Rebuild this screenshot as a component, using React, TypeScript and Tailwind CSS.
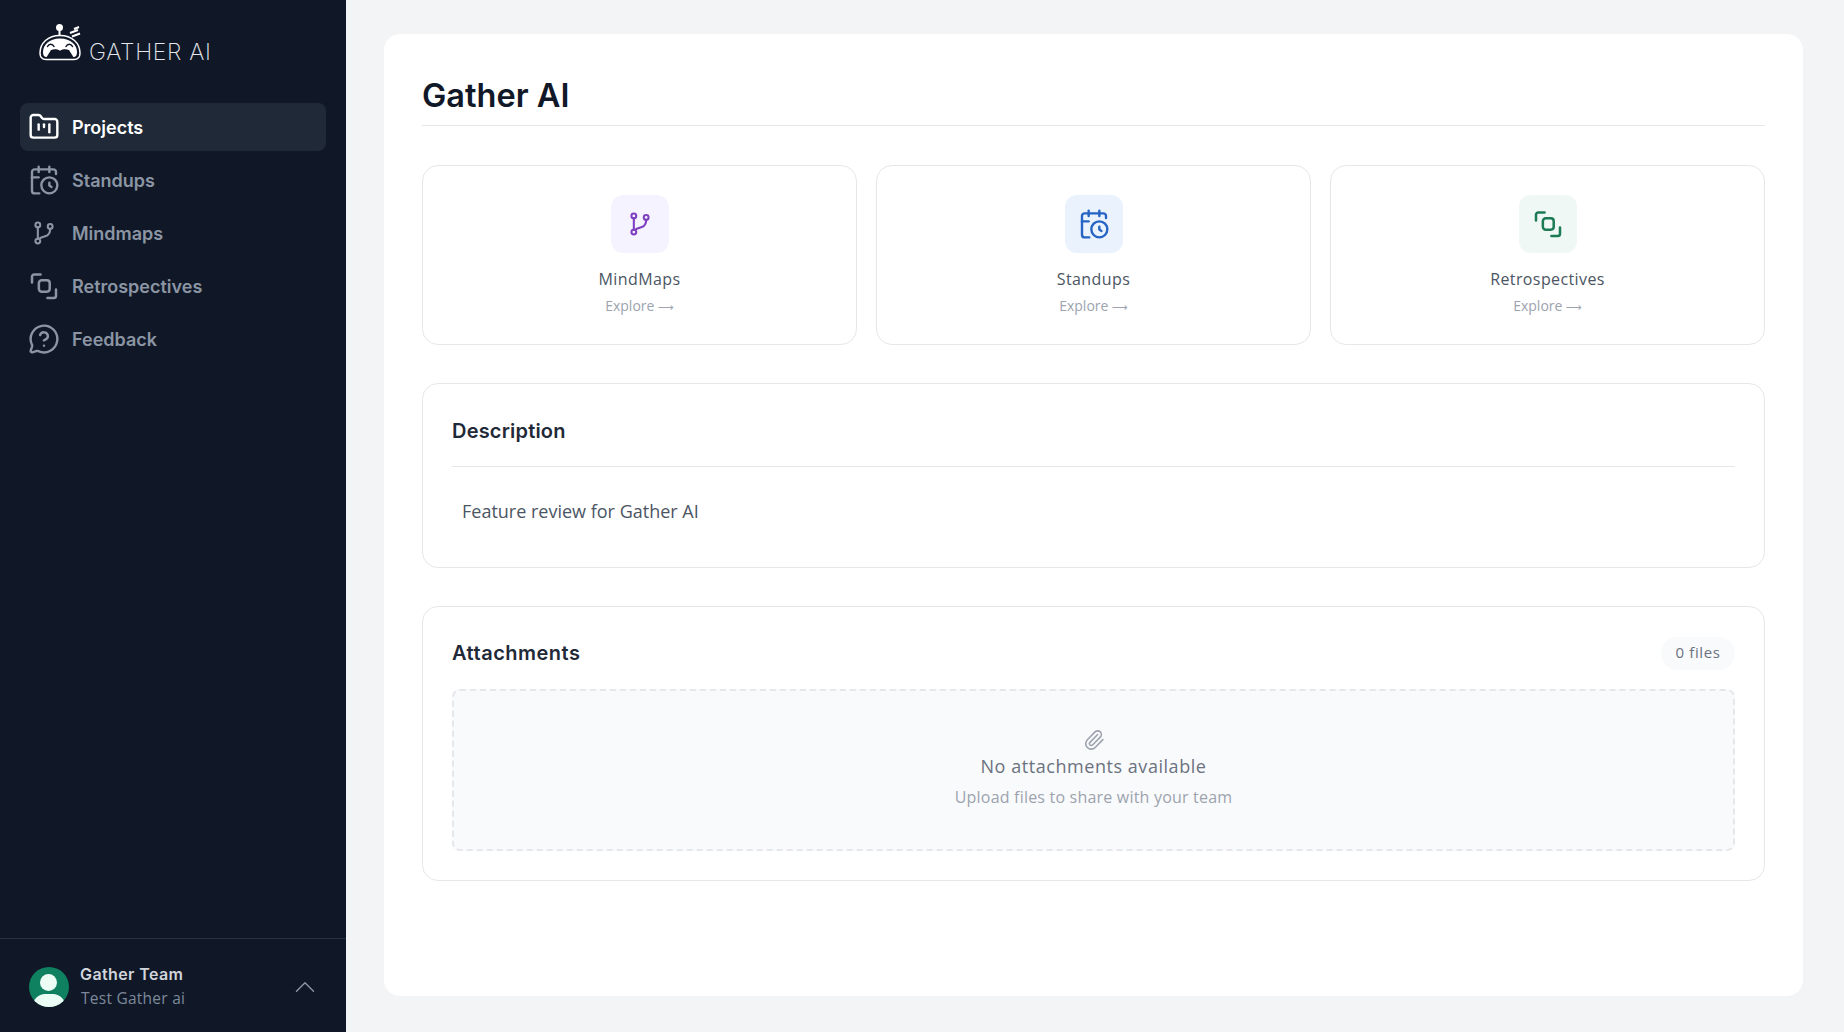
import { CalendarClock, ChevronUp, FolderKanban, MessageCircleQuestion, Paperclip } from "lucide-react";

function BranchIcon({ className }: { className: string }) {
  return (
    <svg className={className} viewBox="-2 -2 28 28" fill="none" stroke="currentColor" strokeWidth="1.800" strokeLinecap="round" strokeLinejoin="round">
      <circle cx="6.600" cy="4.900" r="2.100" />
      <circle cx="6.600" cy="19.100" r="2.100" />
      <circle cx="17.400" cy="6.300" r="2.100" />
      <path d="M6.600 7v10" />
      <path d="M17.400 8.400c0 4-1.500 5.600-4.400 6.400l-4.400 1.500" />
    </svg>
  );
}

function RetroIcon({ className }: { className: string }) {
  return (
    <svg className={className} viewBox="-2 -2 28 28" fill="none" stroke="currentColor" strokeWidth="2.200" strokeLinecap="round" strokeLinejoin="round">
      <path d="M1.500 9V4a2 2 0 0 1 2-2H9" />
      <rect x="7.500" y="7" width="9.500" height="10" rx="2.500" />
      <path d="M22.500 15v5.500a2 2 0 0 1-2 2H15" />
    </svg>
  );
}

function Logo() {
  return (
    <svg className="h-[42px] w-[44px]" viewBox="0 0 44 42" fill="none">
      <circle cx="21.500" cy="4.500" r="3.500" fill="#fff" />
      <path d="M21.500 7v6" stroke="#fff" strokeWidth="2" />
      <path d="M2 30c0-10 8-17.500 20-17.500S42 20 42 30c0 4.500-2 6.500-6 6.500H8c-4 0-6-2-6-6.500Z" stroke="#fff" strokeWidth="1.500" />
      <path d="M5 29c0-7 6-13.500 17-13.500S39 22 39 29c0 3-1 5-4 5H9c-3 0-4-2-4-5Z" fill="#fff" />
      <path d="M8 35l5-8c3-1 6-1 9 .8 3-1.800 6-1.800 9-.8l5 8Z" fill="#101828" />
      <path d="M9.500 23.500c1.500-3 5-3 6.500 0M28 23.500c1.500-3 5-3 6.500 0" stroke="#101828" strokeWidth="1.500" strokeLinecap="round" />
      <path d="m32 10 8-3M34 13.500l8-3M36 6l5-2" stroke="#fff" strokeWidth="2.200" />
    </svg>
  );
}

const navItems = [
  { label: "Projects", icon: FolderKanban, active: true },
  { label: "Standups", icon: CalendarClock, active: false },
  { label: "Mindmaps", icon: BranchIcon, active: false },
  { label: "Retrospectives", icon: RetroIcon, active: false },
  { label: "Feedback", icon: MessageCircleQuestion, active: false },
];

const shortcuts = [
  { label: "MindMaps", icon: BranchIcon, tile: "bg-[#f5f3ff]", color: "text-[#7e3fc0]" },
  { label: "Standups", icon: CalendarClock, tile: "bg-[#eaf3fd]", color: "text-[#2563c4]" },
  { label: "Retrospectives", icon: RetroIcon, tile: "bg-[#eff8f5]", color: "text-[#1c7a55]" },
];

export default function App() {
  return (
    <div className="flex h-[1032px] w-[1844px] overflow-hidden bg-[#f3f4f6] font-['Open_Sans',sans-serif]">
      <aside className="flex w-[346px] shrink-0 flex-col bg-[#101828]">
        <div className="flex h-[103px] items-start pl-[38px] pt-[23px]">
          <Logo />
          <span className="ml-[7px] mt-[16px] font-['Inter',sans-serif] text-[23px] font-extralight leading-[26px] tracking-[0.7px] text-[#e5e7eb]">GATHER AI</span>
        </div>
        <nav className="flex flex-col gap-[5px] px-[20px]">
          {navItems.map((item) => (
            <a
              key={item.label}
              href="#"
              className={
                item.active
                  ? "flex h-[48px] items-center gap-[12px] rounded-lg bg-[#1f2937] pl-[8px] font-['Inter',sans-serif] text-[18px] font-semibold text-white"
                  : "flex h-[48px] items-center gap-[12px] rounded-lg pl-[8px] font-['Inter',sans-serif] text-[18px] font-semibold text-[#8b95a3]"
              }
            >
              <item.icon className="h-[32px] w-[32px]" strokeWidth={1.800} />
              {item.label}
            </a>
          ))}
        </nav>
        <div className="mt-auto flex h-[94px] items-center border-t border-[#283242] pl-[29px] pr-[24px] pt-[2px]">
          <div className="relative h-[40px] w-[40px] overflow-hidden rounded-full bg-[#0f8060]">
            <span className="absolute left-[11px] top-[7px] h-[17px] w-[17px] rounded-full bg-[#ecfdf5]" />
            <span className="absolute left-[4px] top-[27px] h-[24px] w-[32px] rounded-full bg-[#ecfdf5]" />
          </div>
          <div className="ml-[11px] flex-1">
            <p className="font-['Inter',sans-serif] text-[16px] font-semibold leading-[22px] tracking-[0.4px] text-[#d1d5db]">Gather Team</p>
            <p className="mt-[1px] pl-[1px] text-[15.500px] leading-[24px] tracking-[0.25px] text-[#7d8899]">Test Gather ai</p>
          </div>
          <ChevronUp className="h-[34px] w-[34px] text-[#8b95a3]" strokeWidth={1} />
        </div>
      </aside>

      <main className="flex-1 pb-[36px] pl-[38px] pr-[41px] pt-[34px]">
        <div className="h-full rounded-2xl bg-white px-[38px] pt-[36px]">
          <h1 className="border-b border-[#e5e7eb] pb-[3px] font-['Inter',sans-serif] text-[32.500px] font-semibold leading-[52px] text-[#111827]">Gather AI</h1>

          <div className="mt-[39px] grid grid-cols-3 gap-[19px]">
            {shortcuts.map((card) => (
              <div key={card.label} className="flex h-[180px] flex-col items-center rounded-2xl border border-[#e5e7eb] pt-[29px]">
                <div className={`flex h-[58px] w-[58px] items-center justify-center rounded-xl ${card.tile}`}>
                  <card.icon className={`h-[32px] w-[32px] ${card.color}`} strokeWidth={1.800} />
                </div>
                <p className="mt-[14px] text-[16px] leading-[24px] tracking-[0.4px] text-[#4b5563]">{card.label}</p>
                <p className="mt-[5px] text-[14px] leading-[20px] text-[#9ca3af]">
                  Explore <span className="font-['DejaVu_Sans',sans-serif] text-[11px]">⟶</span>
                </p>
              </div>
            ))}
          </div>

          <section className="mt-[38px] h-[185px] rounded-2xl border border-[#e5e7eb] px-[29px] pt-[32px]">
            <h2 className="border-b border-[#e5e7eb] pb-[20px] font-['Inter',sans-serif] text-[20px] font-semibold leading-[30px] tracking-[0.2px] text-[#1f2937]">Description</h2>
            <p className="mt-[30px] pl-[10px] text-[18px] leading-[28px] text-[#4b5563]">Feature review for Gather AI</p>
          </section>

          <section className="mt-[38px] h-[275px] rounded-2xl border border-[#e5e7eb] px-[29px] pt-[30px]">
            <div className="flex h-[32px] items-center justify-between">
              <h2 className="font-['Inter',sans-serif] text-[20px] font-semibold tracking-[0.5px] text-[#1f2937]">Attachments</h2>
              <span className="flex h-[33px] w-[74px] items-center justify-center rounded-full bg-[#f9fafb] pb-[1px] text-[15px] tracking-[0.6px] text-[#6b7280]">0 files</span>
            </div>
            <div className="mt-[20px] flex h-[162px] flex-col items-center rounded-lg border-2 border-dashed border-[#e5e7eb] bg-[#f9fafb] pt-[38px]">
              <Paperclip className="h-[22px] w-[22px] text-[#9ca3af]" strokeWidth={1.750} />
              <p className="mt-[1px] text-[18px] leading-[28px] tracking-[0.55px] text-[#6b7280]">No attachments available</p>
              <p className="mt-[5px] text-[16px] leading-[24px] tracking-[0.2px] text-[#9ca3af]">Upload files to share with your team</p>
            </div>
          </section>
        </div>
      </main>
    </div>
  );
}
